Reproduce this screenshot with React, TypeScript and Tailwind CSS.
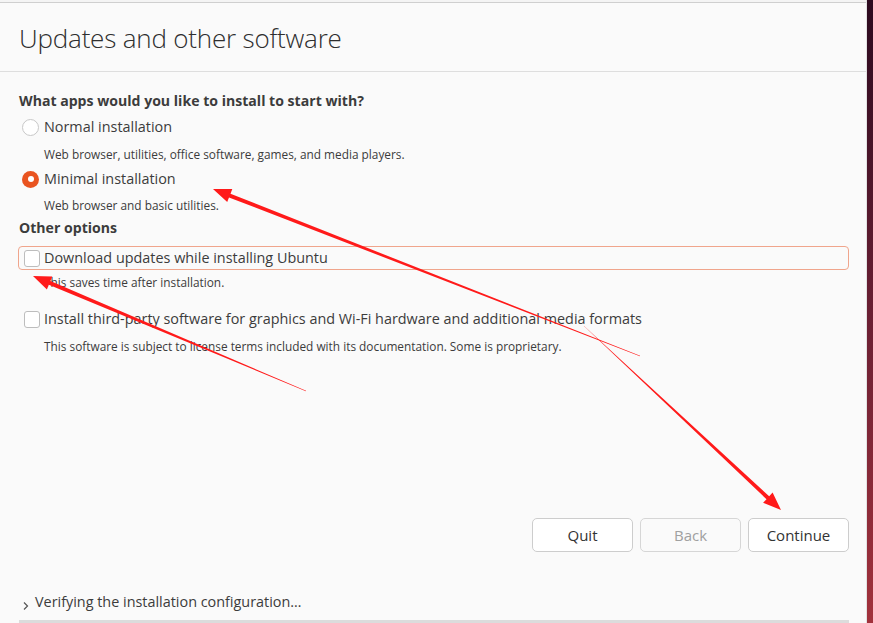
import React from "react";

type Pt = [number, number];

// tapered annotation arrow: thin at the tail, thick at the head
const arrowPoints = (tail: Pt, head: Pt, wTail: number, wHead: number, headLen: number, headW: number) => {
    const dx = head[0] - tail[0];
    const dy = head[1] - tail[1];
    const len = Math.hypot(dx, dy);
    const ux = dx / len;
    const uy = dy / len;
    const nx = -uy;
    const ny = ux;
    const bx = head[0] - ux * headLen;
    const by = head[1] - uy * headLen;
    const p: Pt[] = [
        [tail[0] + nx * wTail / 2, tail[1] + ny * wTail / 2],
        [bx + nx * wHead / 2, by + ny * wHead / 2],
        [bx + nx * headW / 2, by + ny * headW / 2],
        head,
        [bx - nx * headW / 2, by - ny * headW / 2],
        [bx - nx * wHead / 2, by - ny * wHead / 2],
        [tail[0] - nx * wTail / 2, tail[1] - ny * wTail / 2],
    ];
    return p.map((q) => `${q[0].toFixed(1)},${q[1].toFixed(1)}`).join(" ");
};

const Radio = ({ checked }: { checked?: boolean }) =>
    checked ? (
        <span className="w-[17px] h-[17px] rounded-full bg-[#e95420] flex items-center justify-center shrink-0">
            <span className="w-[6px] h-[6px] rounded-full bg-white" />
        </span>
    ) : (
        <span className="w-[17px] h-[17px] rounded-full border border-[#c8c8c8] bg-white shrink-0" />
    );

const Checkbox = () => (
    <span className="w-[16px] h-[17px] rounded-[3px] border border-[#bdbdbd] bg-white shrink-0" />
);

const Button = ({ label, disabled }: { label: string; disabled?: boolean }) => (
    <button
        className={
            disabled
                ? "w-[101px] h-[34px] rounded-[5px] border border-[#d6d6d6] bg-[#fafafa] text-[15px] text-[#a0a0a0]"
                : "w-[101px] h-[34px] rounded-[5px] border border-[#cdcdcd] bg-white text-[15px] text-[#333]"
        }
    >
        {label}
    </button>
);

const App = () => {
    return (
        <div className="relative w-[873px] h-[623px] flex overflow-hidden font-['Open_Sans',sans-serif] text-[#3c3c3c]">
            {/* installer window */}
            <div className="flex-1 flex flex-col bg-[#fafafa] border-r border-[#e2e2e2]">
                <div className="h-[2px] bg-[#f4f4f4]" />
                <div className="h-[1px] bg-[#cfcfcf]" />

                {/* header */}
                <div className="h-[69px] flex items-center pl-[19px] border-b border-[#dedede]">
                    <h1 className="text-[26px] font-light text-[#2e2e2e] tracking-[-0.2px] mt-[2px]">Updates and other software</h1>
                </div>

                {/* body */}
                <div className="flex flex-col px-[19px] pt-[18px]">
                    <div className="text-[14.1px] font-bold leading-[22px] text-[#3c3c3c]">
                        What apps would you like to install to start with?
                    </div>

                    <div className="flex items-center gap-[5px] pl-[3px] h-[26px] mt-[2px]">
                        <Radio />
                        <span className="text-[14.4px]">Normal installation</span>
                    </div>
                    <div className="pl-[25px] mt-[6px] text-[11.85px] leading-[17px]">
                        Web browser, utilities, office software, games, and media players.
                    </div>

                    <div className="flex items-center gap-[5px] pl-[3px] h-[26px] mt-[3px]">
                        <Radio checked />
                        <span className="text-[14.4px]">Minimal installation</span>
                    </div>
                    <div className="pl-[25px] mt-[5px] text-[11.85px] leading-[17px]">
                        Web browser and basic utilities.
                    </div>

                    <div className="text-[14.1px] font-bold leading-[22px] mt-[3px]">Other options</div>

                    <div className="flex items-center gap-[4px] h-[24px] ml-[-1px] mt-[7px] pl-[5px] mr-[-2px] rounded-[4px] border border-[#f0a58c]">
                        <Checkbox />
                        <span className="text-[14.4px]">Download updates while installing Ubuntu</span>
                    </div>
                    <div className="pl-[25px] mt-[4px] text-[11.85px] leading-[17px]">This saves time after installation.</div>

                    <div className="flex items-center gap-[4px] h-[24px] mt-[16px] pl-[5px]">
                        <Checkbox />
                        <span className="text-[14.4px]">Install third-party software for graphics and Wi-Fi hardware and additional media formats</span>
                    </div>
                    <div className="pl-[25px] mt-[7px] text-[11.85px] leading-[17px]">
                        This software is subject to license terms included with its documentation. Some is proprietary.
                    </div>
                </div>

                <div className="flex-1" />

                {/* buttons */}
                <div className="flex justify-end gap-[7px] pr-[17px]">
                    <Button label="Quit" />
                    <Button label="Back" disabled />
                    <Button label="Continue" />
                </div>

                <div className="h-[38px]" />

                {/* expander */}
                <div className="flex items-center gap-[5px] pl-[22px] h-[24px]">
                    <svg width="8" height="12" viewBox="0 0 8 12" className="mt-[8px]">
                        <path d="M2 2.5 L5.5 6 L2 9.5" fill="none" stroke="#555" strokeWidth="1.2" />
                    </svg>
                    <span className="text-[14.4px] leading-[20px]">Verifying the installation configuration…</span>
                </div>
                <div className="h-[3px] mt-[6px] ml-[19px] mr-[17px] bg-[#dcdcdc]" />
            </div>

            {/* desktop edge */}
            <div className="w-[6px] bg-gradient-to-b from-[#2c0a1f] via-[#6a1f33] to-[#a2323c]" />

            {/* annotations */}
            <svg className="absolute inset-0 pointer-events-none" width={873} height={623}>
                <polygon fill="#ff1a1a" points={arrowPoints([640, 356], [213, 189], 0.4, 4, 18, 14)} />
                <polygon fill="#ff1a1a" points={arrowPoints([306, 391], [33, 276], 0.4, 4, 18, 14)} />
                <polygon fill="#ff1a1a" points={arrowPoints([584, 326], [781, 510], 0.4, 4, 18, 14)} />
            </svg>
        </div>
    );
};

export default App;
